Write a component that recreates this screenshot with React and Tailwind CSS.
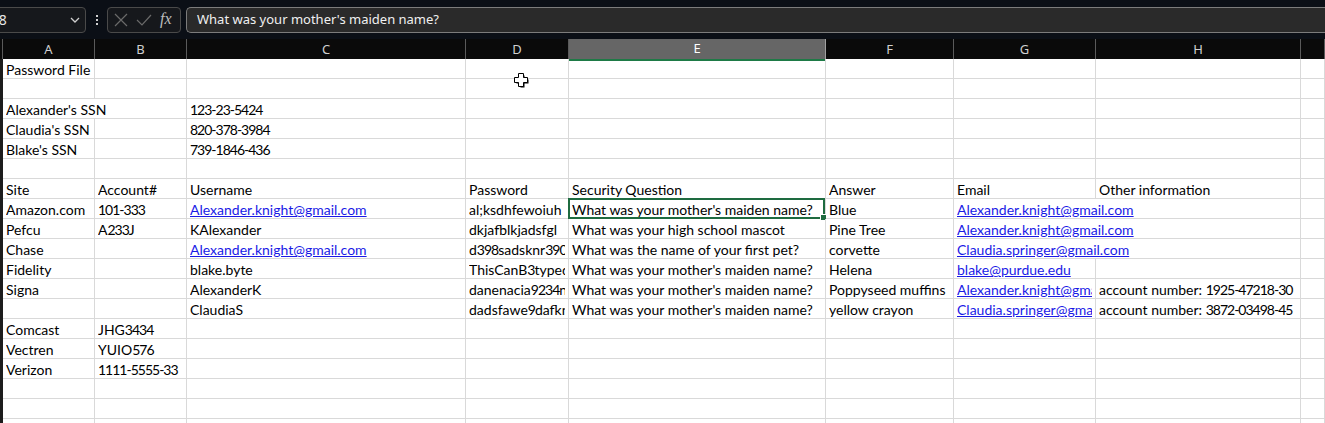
import React from "react";

const GRID =
  "grid grid-cols-[3px_92px_92px_279px_103px_257px_128px_142px_205px_1fr]";

const cellFont = { fontFamily: "Lato, 'Liberation Sans', sans-serif" };

function Txt({ s }) {
  const parts = s.split(/([\d-]*\d[\d-]*)/);
  return (
    <>
      {parts.map((p, i) =>
        /\d/.test(p) ? (
          <span key={i} className="tracking-[-1px]">
            {p}
          </span>
        ) : (
          <React.Fragment key={i}>{p}</React.Fragment>
        )
      )}
    </>
  );
}

function Link({ children }) {
  return <span className="text-[#1a1ae6] underline decoration-[#1a1ae6]">{children}</span>;
}

const L = (t) => ({ t, link: true });

const rows = [
  ["Password File", "", "", "", "", "", "", "", ""],
  ["", "", "", "", "", "", "", "", ""],
  [{ t: "Alexander's SSN", span: 2 }, "123-23-5424", "", "", "", "", "", ""],
  ["Claudia's SSN", "", "820-378-3984", "", "", "", "", "", ""],
  ["Blake's SSN", "", "739-1846-436", "", "", "", "", "", ""],
  ["", "", "", "", "", "", "", "", ""],
  ["Site", "Account#", "Username", "Password", "Security Question", "Answer", "Email", "Other information", ""],
  ["Amazon.com", "101-333", L("Alexander.knight@gmail.com"), "al;ksdhfewoiuh", { t: "What was your mother's maiden name?", sel: true }, "Blue", { t: "Alexander.knight@gmail.com", link: true, span: 2 }, ""],
  ["Pefcu", "A233J", "KAlexander", "dkjafblkjadsfgl", "What was your high school mascot", "Pine Tree", { t: "Alexander.knight@gmail.com", link: true, span: 2 }, ""],
  ["Chase", "", L("Alexander.knight@gmail.com"), "d398sadsknr390", "What was the name of your first pet?", "corvette", { t: "Claudia.springer@gmail.com", link: true, span: 2 }, ""],
  ["Fidelity", "", "blake.byte", "ThisCanB3typedOnKeys", "What was your mother's maiden name?", "Helena", L("blake@purdue.edu"), "", ""],
  ["Signa", "", "AlexanderK", "danenacia9234nd87", "What was your mother's maiden name?", "Poppyseed muffins", L("Alexander.knight@gmail.com"), "account number: 1925-47218-30", ""],
  ["", "", "ClaudiaS", "dadsfawe9dafkne34", "What was your mother's maiden name?", "yellow crayon", L("Claudia.springer@gmail.com"), "account number: 3872-03498-45", ""],
  ["Comcast", "JHG3434", "", "", "", "", "", "", ""],
  ["Vectren", "YUIO576", "", "", "", "", "", "", ""],
  ["Verizon", "1111-5555-33", "", "", "", "", "", "", ""],
  ["", "", "", "", "", "", "", "", ""],
  ["", "", "", "", "", "", "", "", ""],
  ["", "", "", "", "", "", "", "", ""],
];

function Cell({ c }) {
  const item = typeof c === "string" ? { t: c } : c;
  const span = item.span === 2 ? "col-span-2" : "";
  return (
    <div
      className={`relative h-5 border-r border-b border-[#d9d9d9] whitespace-nowrap px-[3px] text-[14px] leading-[19px] text-black ${span}`}
    >
      <div className="overflow-hidden h-full translate-y-[1px]">
        {item.link ? (
          <Link>
            <Txt s={item.t} />
          </Link>
        ) : (
          <Txt s={item.t} />
        )}
      </div>
      {item.sel && (
        <div className="absolute -top-px -left-px right-0 -bottom-px border-2 border-[#1e6b40]">
          <div className="absolute -right-[4px] -bottom-[4px] w-[7px] h-[7px] bg-[#1e6b40] border border-white" />
        </div>
      )}
    </div>
  );
}

function Header() {
  const letters = ["A", "B", "C", "D", "E", "F", "G", "H", ""];
  return (
    <div className={`${GRID} h-[20px] bg-[#0a0a0a]`} style={{ fontFamily: "'Noto Sans', sans-serif" }}>
      <div className="border-r border-[#5a5a5a]" />
      {letters.map((l, i) =>
        l === "E" ? (
          <div
            key={i}
            className="flex items-center justify-center bg-[#666666] border-r border-[#a0a0a0] border-b-2 border-b-[#1e7a46] text-[13px] text-white"
          >
            {l}
          </div>
        ) : (
          <div
            key={i}
            className="flex items-center justify-center border-r border-[#5a5a5a] text-[13px] text-[#d0d0d0]"
          >
            {l}
          </div>
        )
      )}
    </div>
  );
}

function TopBar() {
  return (
    <div className="h-[39px] bg-[#0b0f16] flex items-center" style={{ fontFamily: "'Noto Sans', sans-serif" }}>
      <div className="-ml-[20px] w-[106px] h-[26px] rounded-[4px] border border-[#4a4a4a] bg-[#16181c] flex items-center pl-[10px] pr-[5px] shrink-0">
        <span className="text-[14px] text-[#e6e6e6] flex-1">E8</span>
        <svg width="10" height="6" viewBox="0 0 10 6">
          <path d="M1 1 L5 5 L9 1" fill="none" stroke="#cfcfcf" strokeWidth="1.3" />
        </svg>
      </div>
      <div className="w-[21px] flex flex-col items-center gap-[2px] shrink-0">
        <div className="w-[2px] h-[2px] bg-[#cfcfcf]" />
        <div className="w-[2px] h-[2px] bg-[#cfcfcf]" />
        <div className="w-[2px] h-[2px] bg-[#cfcfcf]" />
      </div>
      <div className="w-[74px] h-[26px] rounded-[4px] border border-[#4a4a4a] bg-[#16181c] flex items-center pl-[6px] gap-[8px] shrink-0">
        <svg width="14" height="14" viewBox="0 0 14 14">
          <path d="M1 1 L13 13 M13 1 L1 13" stroke="#6a6a6a" strokeWidth="1.2" />
        </svg>
        <svg width="16" height="12" viewBox="0 0 16 12">
          <path d="M1 6 L6 11 L15 1" fill="none" stroke="#6a6a6a" strokeWidth="1.2" />
        </svg>
        <span className="text-[#bdbdbd] italic text-[16px] leading-none -mt-[2px]" style={{ fontFamily: "'Liberation Serif', serif" }}>
          fx
        </span>
      </div>
      <div className="ml-[5px] flex-1 h-[26px] rounded-l-[5px] border border-r-0 border-[#7c7c7c] bg-[#2a2a2a] flex items-center pl-[10px] text-[13px] text-[#f0f0f0]">
        What was your mother's maiden name?
      </div>
    </div>
  );
}

function Cursor() {
  return (
    <svg
      className="absolute left-[513px] top-[72px]"
      width="18"
      height="18"
      viewBox="0 0 18 18"
    >
      <path d="M6.5 2.5 H10.5 V6.5 H14.5 V10.5 H10.5 V14.5 H6.5 V10.5 H2.5 V6.5 H6.5 Z" fill="black" transform="translate(1 1)" />
      <path d="M5.5 1.5 H10.5 V5.5 H14.5 V10.5 H10.5 V14.5 H5.5 V10.5 H1.5 V5.5 H5.5 Z" fill="white" stroke="black" strokeWidth="1" />
    </svg>
  );
}

export default function App() {
  return (
    <div className="relative w-[1325px] h-[423px] overflow-hidden bg-white">
      <TopBar />
      <Header />
      <div style={cellFont}>
        {rows.map((r, ri) => (
          <div key={ri} className={GRID}>
            <div className="h-5 bg-[#1c1c1c]" />
            {r.map((c, ci) => (
              <Cell key={ci} c={c} />
            ))}
          </div>
        ))}
      </div>
      <Cursor />
    </div>
  );
}
